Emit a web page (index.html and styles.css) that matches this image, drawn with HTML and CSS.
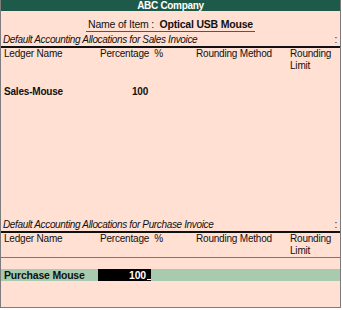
FILE: index.html
```html
<!DOCTYPE html>
<html lang="en">
<head>
    <meta charset="UTF-8">
    <title>Stock Item Alteration</title>
    <link rel="stylesheet" href="styles.css">
</head>
<body>
    <div class="window">
        <div class="titlebar">ABC Company</div>

        <div class="item-row">
            <span class="item-name">Name of Item :&nbsp; <b>Optical USB Mouse</b></span>
        </div>

        <div class="section-title">
            <span>Default Accounting Allocations for Sales Invoice</span>
            <span class="colon">:</span>
        </div>
        <div class="col-head">
            <span class="col-ledger">Ledger Name</span>
            <span class="col-pct">Percentage&nbsp; %</span>
            <span class="col-method">Rounding Method</span>
            <span class="col-limit">Rounding<br>Limit</span>
        </div>
        <div class="section-body sales">
            <div class="entry">
                <span class="col-ledger">Sales-Mouse</span>
                <span class="col-pct amount">100</span>
            </div>
        </div>

        <div class="section-title">
            <span>Default Accounting Allocations for Purchase Invoice</span>
            <span class="colon">:</span>
        </div>
        <div class="col-head ruled">
            <span class="col-ledger">Ledger Name</span>
            <span class="col-pct">Percentage&nbsp; %</span>
            <span class="col-method">Rounding Method</span>
            <span class="col-limit">Rounding<br>Limit</span>
        </div>
        <div class="section-body purchase">
            <div class="entry active">
                <span class="col-ledger">Purchase Mouse</span>
                <span class="col-pct amount">100<span class="caret"></span></span>
            </div>
        </div>
    </div>
</body>
</html>
```

FILE: styles.css
```css
body {
    margin: 0;
    padding: 0;
    background-color: #ffffff;
    font-family: 'Liberation Sans', Arial, sans-serif;
    font-size: 10px;
    letter-spacing: -0.2px;
    color: #111;
}

.window {
    width: 341px;
    height: 308px;
    box-sizing: border-box;
    background-color: #ffe0d2;
    border: 1px solid #7c7c7c;
    border-top: none;
    overflow: hidden;
}

.titlebar {
    height: 11px;
    line-height: 11px;
    background-color: #1d5a49;
    color: #ffffff;
    font-weight: bold;
    text-align: center;
    letter-spacing: -0.3px;
}

.item-row {
    height: 23px;
    text-align: center;
}

.item-name {
    display: inline-block;
    margin-top: 7px;
    line-height: 13px;
    padding: 0 2px;
    border-bottom: 1px solid #555;
    font-size: 10.5px;
}

.section-title {
    display: flex;
    justify-content: space-between;
    height: 12px;
    line-height: 12px;
    padding: 0 2px;
    font-style: italic;
    letter-spacing: -0.35px;
    border-bottom: 2px solid #111;
}

.colon {
    font-style: normal;
    padding-right: 1px;
}

.col-head,
.entry {
    display: flex;
    line-height: 12px;
}

.col-head {
    height: 24px;
}

.col-head.ruled {
    border-bottom: 1px solid #777;
}

.col-ledger {
    width: 96px;
    padding-left: 3px;
}

.col-pct {
    width: 96px;
}

.col-method {
    width: 94px;
}

.section-body {
    box-sizing: border-box;
    height: 147px;
    padding-top: 14px;
}

.section-body.purchase {
    height: 40px;
    padding-top: 11px;
}

.entry {
    height: 12px;
    font-weight: bold;
}

.amount {
    width: 48px;
    text-align: right;
}

.entry.active {
    background-color: #a8cbb0;
    font-size: 10.5px;
}

.entry.active .amount {
    display: flex;
    justify-content: flex-end;
    align-items: flex-start;
    box-sizing: border-box;
    width: 53px;
    margin-left: -2px;
    padding-right: 0;
    background-color: #000;
    color: #fff;
}

.caret {
    width: 4px;
    height: 11px;
    margin-left: 1px;
    box-sizing: border-box;
    border-bottom: 1px solid #fff;
}
```
